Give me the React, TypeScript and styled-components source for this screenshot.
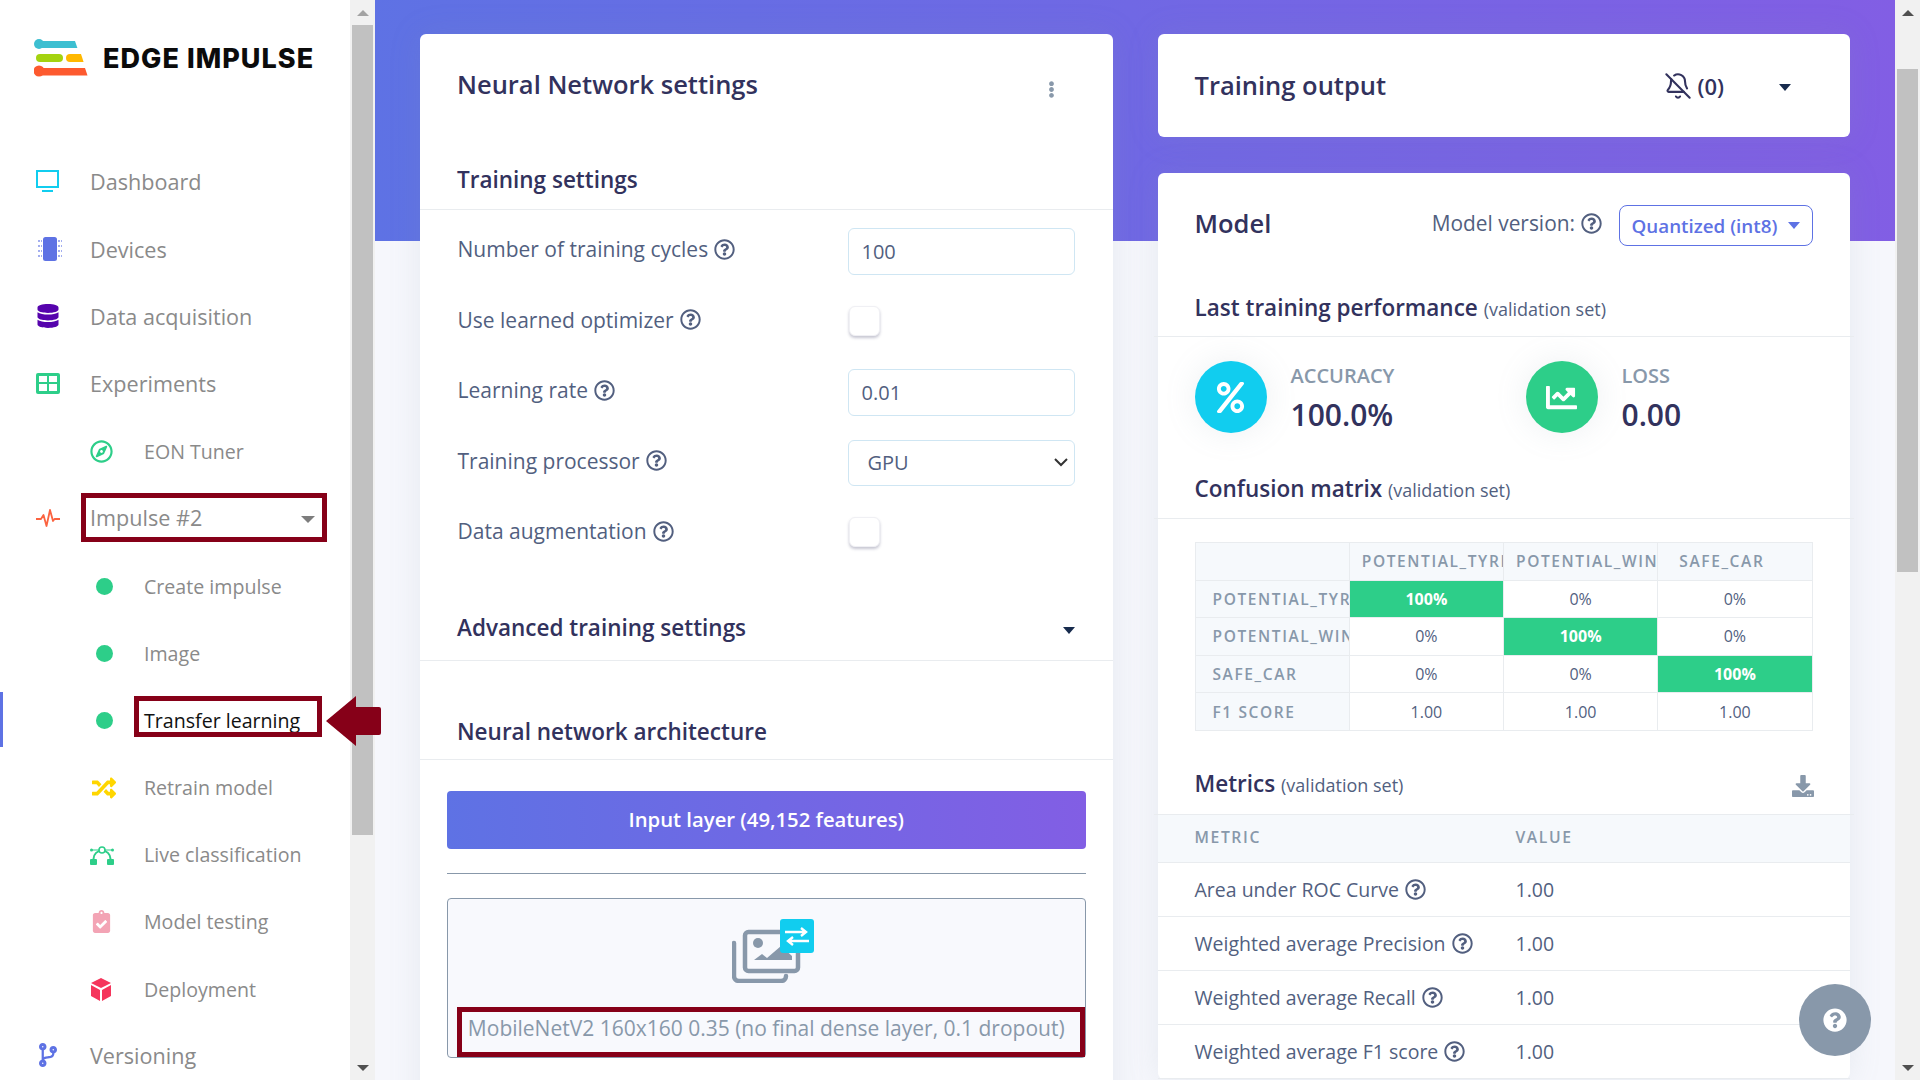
import React from "react";
import styled, { createGlobalStyle } from "styled-components";
import {
  FaChartLine,
  FaClipboardCheck,
  FaCodeBranch,
  FaDatabase,
  FaDownload,
  FaEllipsisV,
  FaPercent,
  FaQuestionCircle,
  FaRandom,
  FaRegCompass,
  FaRegQuestionCircle,
} from "react-icons/fa";
import { BellOff } from "lucide-react";

const Global = createGlobalStyle`
  html, body { margin: 0; padding: 0; height: 100%; overflow: hidden; }
  body { font-family: "Open Sans", "Noto Sans", sans-serif; color: #525f7f; background: #f7f8fc; }
  * { box-sizing: border-box; }
`;

const Page = styled.div`
  display: flex;
  width: 1920px;
  height: 1080px;
  overflow: hidden;
  position: relative;
`;

/* ---------- scrollbars ---------- */
const Track = styled.div`
  width: 25px;
  height: 1080px;
  flex: none;
  background: #f1f1f1;
  position: relative;
  display: flex;
  flex-direction: column;
  align-items: center;
`;
const ArrowBox = styled.div`
  height: 25px;
  flex: none;
  display: flex;
  align-items: center;
  justify-content: center;
  width: 100%;
`;
const Arrow = styled.span<{ $up?: boolean; $color: string }>`
  width: 0;
  height: 0;
  border-left: 6px solid transparent;
  border-right: 6px solid transparent;
  ${(p) =>
    p.$up
      ? `border-bottom: 6px solid ${p.$color};`
      : `border-top: 6px solid ${p.$color};`}
`;
const Thumb = styled.div<{ $top: number; $h: number }>`
  width: 21px;
  height: ${(p) => p.$h}px;
  margin-top: ${(p) => p.$top}px;
  background: #c1c1c1;
  flex: none;
`;
const Spacer = styled.div`
  flex: 1;
`;

/* ---------- sidebar ---------- */
const Sidebar = styled.aside`
  width: 350px;
  flex: none;
  background: #fff;
  height: 1080px;
  position: relative;
`;
const Brand = styled.div`
  height: 148.3px;
  padding: 38px 0 0 34px;
  display: flex;
  align-items: flex-start;
  gap: 15px;
`;
const BrandName = styled.span`
  font-family: "Inter", "Liberation Sans", sans-serif;
  font-weight: 800;
  font-size: 27px;
  line-height: 41px;
  color: #0b0b0b;
  letter-spacing: 1.05px;
  white-space: nowrap;
`;
const NavRow = styled.div<{ $sub?: boolean; $active?: boolean }>`
  height: 67.2px;
  display: flex;
  align-items: center;
  position: relative;
  padding-left: ${(p) => (p.$sub ? 90 : 36)}px;
  padding-top: ${(p) => (p.$sub ? 2 : 0)}px;
  color: ${(p) => (p.$active ? "#111" : "#8a8a8a")};
  font-size: ${(p) => (p.$sub ? 19.6 : 21.6)}px;
  ${(p) =>
    p.$active
      ? `&::before { content: ""; position: absolute; left: 0; top: 6px; width: 3px; height: 55px; background: #5e72e4; }`
      : ""}
`;
const NavIcon = styled.span<{ $nudge?: number; $color: string }>`
  width: 54px;
  padding-left: ${(p) => p.$nudge ?? 0}px;
  flex: none;
  display: flex;
  align-items: center;
  color: ${(p) => p.$color};
`;
const Dot = styled.span`
  width: 17px;
  height: 17px;
  margin-left: 6px;
  border-radius: 50%;
  background: #2dce89;
`;
const ImpulseCaret = styled.span`
  position: absolute;
  right: 35px;
  top: 32px;
  border-left: 7px solid transparent;
  border-right: 7px solid transparent;
  border-top: 7px solid #7d7d7d;
`;
const RedBox = styled.span<{ $l: number; $r: number; $t: number; $b: number }>`
  position: absolute;
  left: ${(p) => p.$l}px;
  right: ${(p) => p.$r}px;
  top: ${(p) => p.$t}px;
  bottom: ${(p) => p.$b}px;
  border: 5px solid #860018;
  pointer-events: none;
`;
const BigArrow = styled.svg`
  position: absolute;
  left: 326px;
  top: 696px;
  z-index: 5;
`;

/* ---------- main ---------- */
const Main = styled.main`
  width: 1520px;
  flex: none;
  height: 1080px;
  padding: 34px 45px 0;
  background: linear-gradient(87deg, #5e72e4, #825ee4) no-repeat top left / 100% 241px,
    #f6f7fc;
  display: grid;
  grid-template-columns: 1fr 1fr;
  gap: 45px;
  align-items: start;
`;
const Column = styled.div`
  display: flex;
  flex-direction: column;
  gap: 36px;
  min-width: 0;
`;
const Card = styled.section<{ $tall?: boolean }>`
  background: #fff;
  border-radius: 6px;
  box-shadow: 0 0 2rem rgba(136, 152, 170, 0.15);
  ${(p) => (p.$tall ? "height: 1120px;" : "")}
`;
const CardHead = styled.header`
  height: 104px;
  padding: 0 38px 4px 37px;
  display: flex;
  align-items: center;
  justify-content: space-between;
`;
const CardTitle = styled.h2`
  margin: 0;
  font-size: 25.5px;
  line-height: 34px;
  font-weight: 600;
  color: #32325d;
`;
const ShiftedTitle = styled(CardTitle)<{ $up: number }>`
  margin-top: ${(p) => -p.$up}px;
`;
const Kebab = styled.span`
  color: #8898aa;
  display: flex;
  margin: 10px 15px 0 0;
`;
const SectionHead = styled.div<{ $mt: number; $pb: number; $bleed?: boolean }>`
  margin: ${(p) => p.$mt}px ${(p) => (p.$bleed ? -4 : 0)}px 0;
  padding: 0 ${(p) => (p.$bleed ? 40 : 38)}px ${(p) => p.$pb}px ${(p) => (p.$bleed ? 41 : 37)}px;
  border-bottom: 1px solid #e9ecef;
  display: flex;
  align-items: center;
  justify-content: space-between;
  position: relative;
`;
const SectionTitle = styled.h3`
  margin: 0;
  font-size: 22.5px;
  line-height: 30px;
  font-weight: 600;
  color: #32325d;
  white-space: nowrap;
`;
const Note = styled.small`
  font-size: 18px;
  font-weight: 400;
  color: #525f7f;
`;
const FormBody = styled.div`
  padding: 6px 38px 0 37.5px;
`;
const FormRow = styled.div`
  height: 70.5px;
  display: grid;
  grid-template-columns: 1fr 227px;
  align-items: center;
`;
const FieldLabel = styled.label`
  font-size: 21px;
  color: #525f7f;
  display: flex;
  align-items: center;
  gap: 6px;
  position: relative;
  top: -2px;
`;
const Help = styled(FaRegQuestionCircle)`
  font-size: 21px;
  flex: none;
  color: #525f7f;
`;
const NumberInput = styled.input`
  width: 227px;
  height: 47px;
  border: 1px solid #cfe6f3;
  border-radius: 6px;
  padding: 0 13px;
  font: 400 20px "Open Sans", sans-serif;
  color: #525f7f;
  background: #fff;
  outline: none;
`;
const NativeSelect = styled.select`
  appearance: none;
  width: 227px;
  height: 46px;
  border: 1px solid #cfe6f3;
  border-radius: 6px;
  padding: 0 30px 0 19px;
  font: 400 20px "Open Sans", sans-serif;
  color: #525f7f;
  background: #fff
    url("data:image/svg+xml,%3Csvg xmlns='http://www.w3.org/2000/svg' width='14' height='9'%3E%3Cpath d='M1 1l6 6 6-6' fill='none' stroke='%23333' stroke-width='2'/%3E%3C/svg%3E")
    no-repeat right 6px center;
  outline: none;
`;
const Check = styled.span`
  width: 31px;
  height: 30px;
  margin: -2px 0 0 1px;
  border-radius: 6px;
  background: #fff;
  border: 1px solid #f0f0f4;
  box-shadow: 0 2px 3px rgba(50, 50, 93, 0.28);
`;
const ArchBody = styled.div`
  padding: 31px 27px 0;
  position: relative;
`;
const InputLayer = styled.div`
  height: 58px;
  padding-bottom: 2px;
  border-radius: 4px;
  background: linear-gradient(87deg, #5e72e4, #825ee4);
  color: #fff;
  display: flex;
  align-items: center;
  justify-content: center;
  font-size: 20.3px;
  font-weight: 600;
`;
const LayerRule = styled.hr`
  margin: 24px 0 24px;
  border: 0;
  border-top: 1px solid #8898aa;
`;
const LayerCard = styled.div`
  position: relative;
  height: 160px;
  border: 1px solid #8898aa;
  border-radius: 4px;
  background: #f8f9fd;
  display: flex;
  flex-direction: column;
  align-items: center;
  padding-top: 20px;
`;
const LayerIconBox = styled.div`
  margin-left: 14px;
  display: flex;
`;
const LayerName = styled.div`
  margin-top: 31px;
  width: 100%;
  text-align: center;
  font-size: 21px;
  color: #8898aa;
  white-space: nowrap;
`;
const LayerMark = styled.span`
  position: absolute;
  left: 9px;
  right: 0;
  top: 108px;
  height: 50px;
  border: 5px solid #860018;
`;

/* ---------- right column ---------- */
const OutputCard = styled(Card)`
  height: 103px;
  padding: 0 59px 0 37px;
  display: flex;
  align-items: center;
`;
const OutputActions = styled.div`
  margin-left: auto;
  display: flex;
  align-items: center;
  font-size: 22px;
  font-weight: 600;
  color: #32325d;
  gap: 5px;
`;
const Caret = styled.span<{ $color?: string; $gap?: number; $drop?: number }>`
  display: inline-block;
  margin-left: ${(p) => p.$gap ?? 0}px;
  margin-top: ${(p) => p.$drop ?? 0}px;
  border-left: 6.5px solid transparent;
  border-right: 6.5px solid transparent;
  border-top: 7px solid ${(p) => p.$color ?? "#172b4d"};
`;
const ModelHead = styled.header`
  padding: 32px 37px 0 37px;
  height: 73px;
  display: flex;
  align-items: center;
  position: relative;
`;
const ModelVersion = styled.div`
  margin-left: auto;
  font-size: 20.9px;
  color: #525f7f;
  display: flex;
  align-items: center;
  gap: 6px;
  margin-top: -5px;
`;
const VersionButton = styled.button`
  margin-left: 17px;
  height: 41px;
  width: 194px;
  border: 1px solid #5e72e4;
  border-radius: 8px;
  background: #fff;
  color: #5e72e4;
  font: 600 18.8px "Open Sans", sans-serif;
  display: flex;
  align-items: center;
  justify-content: center;
  gap: 11px;
  padding: 0;
`;
const Stats = styled.div`
  padding: 24px 37px 0;
  display: grid;
  grid-template-columns: 331px 1fr;
`;
const Stat = styled.div`
  display: flex;
  gap: 24px;
`;
const StatCircle = styled.span<{ $bg: string }>`
  width: 72px;
  height: 72px;
  border-radius: 50%;
  background: ${(p) => p.$bg};
  color: #fff;
  display: flex;
  align-items: center;
  justify-content: center;
  font-size: 31px;
  box-shadow: 0 0 2rem rgba(136, 152, 170, 0.15);
`;
const StatLabel = styled.div`
  font-size: 20px;
  font-weight: 600;
  line-height: 28px;
  color: #8898aa;
  margin-top: 1px;
`;
const StatValue = styled.div`
  font-size: 30px;
  font-weight: 600;
  line-height: 36px;
  color: #32325d;
  margin-top: 7px;
`;
const Matrix = styled.table`
  margin: 23px 37px 0;
  width: 618px;
  border-collapse: collapse;
  table-layout: fixed;
`;
const MatrixRow = styled.tr`
  height: 37.6px;
`;
const MatrixHead = styled.th<{ $side?: boolean }>`
  background: #f6f9fc;
  border: 1px solid #e9ecef;
  color: #8898aa;
  font-size: 15.5px;
  font-weight: 600;
  letter-spacing: 1.6px;
  white-space: nowrap;
  overflow: hidden;
  padding: ${(p) => (p.$side ? "0 0 0 17px" : "0 38px 0 12px")};
  text-align: ${(p) => (p.$side ? "left" : "center")};
`;
const MatrixCell = styled.td<{ $hit?: boolean }>`
  border: 1px solid #e9ecef;
  text-align: center;
  font-size: 16px;
  font-weight: ${(p) => (p.$hit ? 700 : 400)};
  color: ${(p) => (p.$hit ? "#fff" : "#525f7f")};
  background: ${(p) => (p.$hit ? "#2dce89" : "#fff")};
`;
const DownloadIcon = styled(FaDownload)`
  color: #8898aa;
  font-size: 22px;
  margin-top: 4px;
`;
const MetricsTable = styled.table`
  width: 100%;
  border-collapse: collapse;
  table-layout: fixed;
`;
const MetricsHeadRow = styled.tr`
  height: 48px;
  background: #f6f9fc;
  border-bottom: 1px solid #e9ecef;
`;
const MetricsHeadCell = styled.th`
  text-align: left;
  font-size: 15.7px;
  font-weight: 600;
  letter-spacing: 1.6px;
  color: #8898aa;
  padding: 0 0 4px 37px;
  &:nth-child(2) { padding-left: 1px; }
`;
const MetricRow = styled.tr`
  height: 54px;
  border-bottom: 1px solid #e9ecef;
`;
const MetricName = styled.td`
  font-size: 19.5px;
  color: #525f7f;
  padding-left: 37px;
  white-space: nowrap;
`;
const MetricInline = styled.span`
  display: inline-flex;
  align-items: center;
  gap: 6px;
`;
const MetricValue = styled.td`
  font-size: 19.5px;
  color: #525f7f;
`;
const HelpBubble = styled.button`
  position: absolute;
  left: 1799px;
  top: 984px;
  width: 72px;
  height: 72px;
  border-radius: 50%;
  border: 0;
  background: #8898aa;
  color: #fff;
  display: flex;
  align-items: center;
  justify-content: center;
  font-size: 24px;
  z-index: 6;
`;

/* ---------- drawings ---------- */
const Logo = () => (
  <svg width="54" height="39" viewBox="34 38 54 39" aria-hidden>
    <circle cx="39" cy="44" r="5" fill="#3dbfd1" />
    <path d="M39 41h36l2.400 7H39z" fill="#3dbfd1" />
    <rect x="36" y="54" width="27" height="8" rx="4" fill="#a4d30f" />
    <path d="M70 54h11l2.600 8H70a4 4 0 0 1 0-8z" fill="#ffb800" />
    <circle cx="39" cy="71" r="5.500" fill="#fd5a2f" />
    <path d="M39 68h46l2.500 7.500H39z" fill="#fd5a2f" />
  </svg>
);
const Monitor = () => (
  <svg width="24" height="23" viewBox="0 0 24 23" aria-hidden>
    <rect x="1" y="1" width="21" height="16" fill="none" stroke="currentColor" strokeWidth="2" />
    <rect x="6" y="20" width="11" height="2" fill="currentColor" />
  </svg>
);
const Chip = () => (
  <svg width="26" height="24" viewBox="0 0 26 24" aria-hidden>
    <rect x="7" y="0" width="14" height="24" rx="2.500" fill="currentColor" />
    <g stroke="currentColor" strokeWidth="1.400" strokeDasharray="2 1" opacity="0.75">
      <path d="M2 4h4M2 9h4M2 14h4M2 19h4M22 4h4M22 9h4M22 14h4M22 19h4" />
    </g>
  </svg>
);
const GridIcon = () => (
  <svg width="24" height="21" viewBox="0 0 24 21" aria-hidden>
    <rect width="24" height="21" rx="2" fill="currentColor" />
    <path d="M3 3h8v6H3zM13 3h8v6h-8zM3 11h8v7H3zM13 11h8v7h-8z" fill="#fff" />
  </svg>
);
const Pulse = () => (
  <svg width="24" height="18" viewBox="0 0 24 18" aria-hidden>
    <path
      d="M0 10h5l2.500-4 3 11 3.500-16 3 11 1.500-2H24"
      fill="none"
      stroke="currentColor"
      strokeWidth="1.800"
      strokeLinejoin="round"
    />
  </svg>
);
const Bezier = () => (
  <svg width="24" height="20" viewBox="0 0 24 20" aria-hidden>
    <path
      d="M3.500 14C3.500 9 7.500 5.500 12 5.500S20.500 9 20.500 14"
      fill="none"
      stroke="currentColor"
      strokeWidth="2"
    />
    <path d="M1 5h22" stroke="currentColor" strokeWidth="1" />
    <circle cx="1.500" cy="5" r="1.500" fill="currentColor" />
    <circle cx="22.500" cy="5" r="1.500" fill="currentColor" />
    <circle cx="12" cy="5" r="3" fill="#fff" stroke="currentColor" strokeWidth="1.600" />
    <rect x="0" y="14" width="7" height="6" rx="1" fill="currentColor" />
    <rect x="17" y="14" width="7" height="6" rx="1" fill="currentColor" />
  </svg>
);
const Cube = () => (
  <svg width="20" height="23" viewBox="0 0 20 23" aria-hidden>
    <path
      d="M10 0l10 5-10 5L0 5zM0 7l9 5v11l-9-5zM20 7l-9 5v11l9-5z"
      fill="currentColor"
    />
  </svg>
);
const LayerIcon = () => (
  <svg width="82" height="64" viewBox="13 9 82 64" aria-hidden>
    <path
      d="M15 33v33a5 5 0 0 0 5 5h42a5 5 0 0 0 5-5"
      fill="none"
      stroke="#8898aa"
      strokeWidth="4.500"
      strokeLinecap="round"
    />
    <rect x="26" y="22" width="53" height="39" rx="3.500" fill="none" stroke="#8898aa" strokeWidth="4.500" />
    <circle cx="39" cy="33" r="5" fill="#8898aa" />
    <path d="M35 50l8-6 5 4 14-12 11 10v4H35z" fill="#8898aa" />
    <rect x="61" y="9" width="34" height="34" rx="3" fill="#11cdef" />
    <path
      d="M66 22h20M82 18l5 4-5 4M90 31H70M74 27l-5 4 5 4"
      fill="none"
      stroke="#fff"
      strokeWidth="2.400"
    />
  </svg>
);

type NavDef = {
  label: string;
  sub?: boolean;
  color?: string;
  icon?: React.ReactNode;
  active?: boolean;
  nudge?: number;
};
const nav: NavDef[] = [
  { label: "Dashboard", color: "#11cdef", icon: <Monitor /> },
  { label: "Devices", color: "#5e72e4", icon: <Chip /> },
  { label: "Data acquisition", color: "#5603ad", icon: <FaDatabase size={24} /> },
  { label: "Experiments", color: "#2dce89", icon: <GridIcon /> },
  { label: "EON Tuner", sub: true, color: "#2dce89", icon: <FaRegCompass size={23} /> },
  { label: "Impulse #2", color: "#fb6340", icon: <Pulse /> },
  { label: "Create impulse", sub: true, color: "#2dce89", icon: <Dot /> },
  { label: "Image", sub: true, color: "#2dce89", icon: <Dot /> },
  { label: "Transfer learning", sub: true, color: "#2dce89", icon: <Dot />, active: true },
  { label: "Retrain model", sub: true, color: "#ffd600", icon: <FaRandom size={24} />, nudge: 2 },
  { label: "Live classification", sub: true, color: "#2dce89", icon: <Bezier /> },
  { label: "Model testing", sub: true, color: "#f3a4b5", icon: <FaClipboardCheck size={23} /> },
  { label: "Deployment", sub: true, color: "#f5365c", icon: <Cube />, nudge: 1 },
  { label: "Versioning", color: "#5e72e4", icon: <FaCodeBranch size={24} /> },
];

const labels = ["POTENTIAL_TYRE", "POTENTIAL_WINDOW", "SAFE_CAR"];
const metrics = [
  "Area under ROC Curve",
  "Weighted average Precision",
  "Weighted average Recall",
  "Weighted average F1 score",
];
const fields: { label: string; kind: "num" | "check" | "select"; value?: string }[] = [
  { label: "Number of training cycles", kind: "num", value: "100" },
  { label: "Use learned optimizer", kind: "check" },
  { label: "Learning rate", kind: "num", value: "0.01" },
  { label: "Training processor", kind: "select", value: "GPU" },
  { label: "Data augmentation", kind: "check" },
];

export default function App() {
  return (
    <Page>
      <Global />
      <Sidebar>
        <Brand>
          <Logo />
          <BrandName>EDGE IMPULSE</BrandName>
        </Brand>
        {nav.map((n) => (
          <NavRow key={n.label} $sub={n.sub} $active={n.active}>
            <NavIcon $nudge={n.nudge} $color={n.color ?? "#888"}>
              {n.icon}
            </NavIcon>
            {n.label}
            {n.label === "Impulse #2" && (
              <>
                <ImpulseCaret />
                <RedBox $l={81} $r={23} $t={9} $b={9} />
              </>
            )}
            {n.active && <RedBox $l={134} $r={28} $t={10} $b={16} />}
          </NavRow>
        ))}
      </Sidebar>
      <Track>
        <ArrowBox>
          <Arrow $up $color="#a3a3a3" />
        </ArrowBox>
        <Thumb $top={0} $h={810} />
        <Spacer />
        <ArrowBox>
          <Arrow $color="#505050" />
        </ArrowBox>
      </Track>
      <BigArrow width="56" height="50" viewBox="0 0 56 50" aria-hidden>
        <path d="M0 25 L30 0 V11 H53 Q55 11 55 13 V37 Q55 39 53 39 H30 V50 Z" fill="#860018" />
      </BigArrow>

      <Main>
        <Card $tall>
          <CardHead>
            <CardTitle>Neural Network settings</CardTitle>
            <Kebab>
              <FaEllipsisV size={17} />
            </Kebab>
          </CardHead>
          <SectionHead $mt={27} $pb={14}>
            <SectionTitle>Training settings</SectionTitle>
          </SectionHead>
          <FormBody>
            {fields.map((f) => (
              <FormRow key={f.label}>
                <FieldLabel>
                  {f.label} <Help />
                </FieldLabel>
                {f.kind === "num" && <NumberInput readOnly value={f.value} />}
                {f.kind === "check" && <Check />}
                {f.kind === "select" && (
                  <NativeSelect value={f.value} onChange={() => undefined}>
                    <option>GPU</option>
                    <option>CPU</option>
                  </NativeSelect>
                )}
              </FormRow>
            ))}
          </FormBody>
          <SectionHead $mt={44} $pb={17}>
            <SectionTitle>Advanced training settings</SectionTitle>
            <Caret $drop={6} />
          </SectionHead>
          <SectionHead $mt={56} $pb={12}>
            <SectionTitle>Neural network architecture</SectionTitle>
          </SectionHead>
          <ArchBody>
            <InputLayer>Input layer (49,152 features)</InputLayer>
            <LayerRule />
            <LayerCard>
              <LayerIconBox>
                <LayerIcon />
              </LayerIconBox>
              <LayerName>MobileNetV2 160x160 0.35 (no final dense layer, 0.1 dropout)</LayerName>
              <LayerMark />
            </LayerCard>
          </ArchBody>
        </Card>

        <Column>
          <OutputCard>
            <ShiftedTitle $up={2}>Training output</ShiftedTitle>
            <OutputActions>
              <BellOff size={28} strokeWidth={1.8} />
              (0)
              <Caret $gap={50} $drop={3} />
            </OutputActions>
          </OutputCard>
          <Card>
            <ModelHead>
              <ShiftedTitle $up={5}>Model</ShiftedTitle>
              <ModelVersion>
                Model version: <Help />
              </ModelVersion>
              <VersionButton>
                Quantized (int8)
                <Caret $color="#5e72e4" />
              </VersionButton>
            </ModelHead>
            <SectionHead $mt={47} $pb={12} $bleed>
              <SectionTitle>
                Last training performance <Note>(validation set)</Note>
              </SectionTitle>
            </SectionHead>
            <Stats>
              <Stat>
                <StatCircle $bg="#11cdef">
                  <FaPercent />
                </StatCircle>
                <div>
                  <StatLabel>ACCURACY</StatLabel>
                  <StatValue>100.0%</StatValue>
                </div>
              </Stat>
              <Stat>
                <StatCircle $bg="#2dce89">
                  <FaChartLine />
                </StatCircle>
                <div>
                  <StatLabel>LOSS</StatLabel>
                  <StatValue>0.00</StatValue>
                </div>
              </Stat>
            </Stats>
            <SectionHead $mt={41} $pb={13} $bleed>
              <SectionTitle>
                Confusion matrix <Note>(validation set)</Note>
              </SectionTitle>
            </SectionHead>
            <Matrix>
              <tbody>
                <MatrixRow>
                  <MatrixHead />
                  {labels.map((l) => (
                    <MatrixHead key={l}>{l}</MatrixHead>
                  ))}
                </MatrixRow>
                {labels.map((l, r) => (
                  <MatrixRow key={l}>
                    <MatrixHead $side>{l}</MatrixHead>
                    {labels.map((c, i) => (
                      <MatrixCell key={c} $hit={i === r}>
                        {i === r ? "100%" : "0%"}
                      </MatrixCell>
                    ))}
                  </MatrixRow>
                ))}
                <MatrixRow>
                  <MatrixHead $side>F1 SCORE</MatrixHead>
                  {labels.map((c) => (
                    <MatrixCell key={c}>1.00</MatrixCell>
                  ))}
                </MatrixRow>
              </tbody>
            </Matrix>
            <SectionHead $mt={38} $pb={14} $bleed>
              <SectionTitle>
                Metrics <Note>(validation set)</Note>
              </SectionTitle>
              <DownloadIcon />
            </SectionHead>
            <MetricsTable>
              <colgroup>
                <col width="357" />
                <col />
              </colgroup>
              <tbody>
                <MetricsHeadRow>
                  <MetricsHeadCell>METRIC</MetricsHeadCell>
                  <MetricsHeadCell>VALUE</MetricsHeadCell>
                </MetricsHeadRow>
                {metrics.map((m) => (
                  <MetricRow key={m}>
                    <MetricName>
                      <MetricInline>
                        {m} <Help />
                      </MetricInline>
                    </MetricName>
                    <MetricValue>1.00</MetricValue>
                  </MetricRow>
                ))}
              </tbody>
            </MetricsTable>
          </Card>
        </Column>
      </Main>
      <Track>
        <ArrowBox>
          <Arrow $up $color="#505050" />
        </ArrowBox>
        <Thumb $top={44} $h={503} />
        <Spacer />
        <ArrowBox>
          <Arrow $color="#505050" />
        </ArrowBox>
      </Track>
      <HelpBubble aria-label="Help">
        <FaQuestionCircle />
      </HelpBubble>
    </Page>
  );
}
